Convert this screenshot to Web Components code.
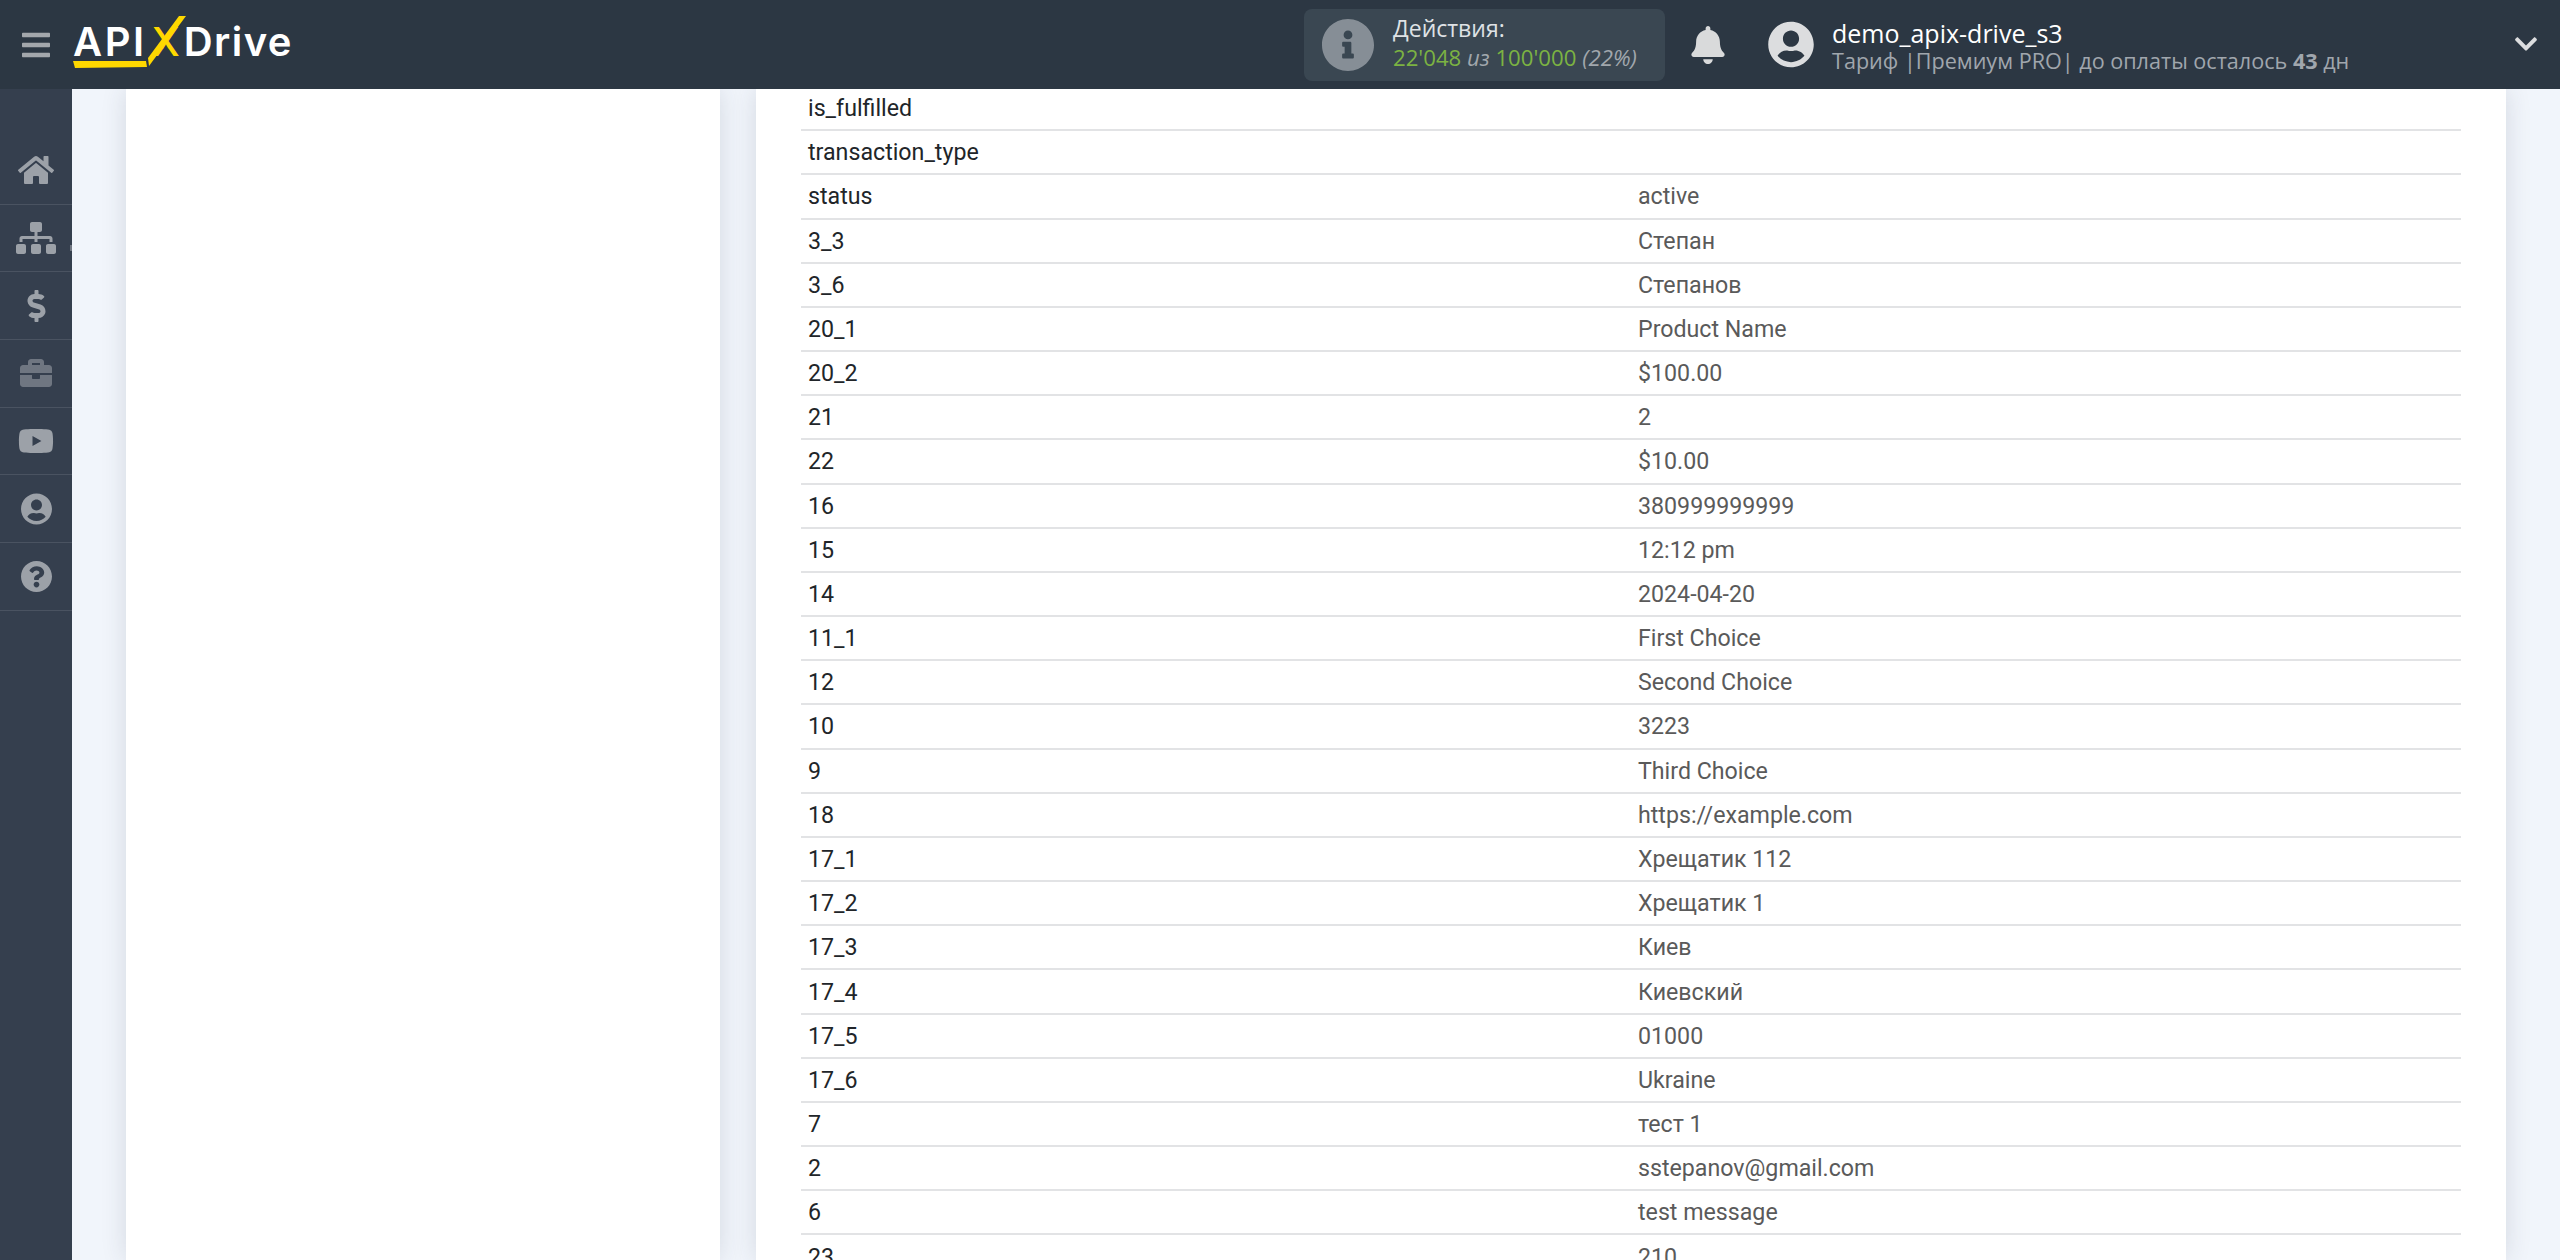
<!DOCTYPE html>
<html lang="ru">
<head>
<meta charset="utf-8">
<title>ApiX-Drive</title>
<style>
  html, body { margin: 0; height: 100%; overflow: hidden; background: #f1f5fb; }
</style>
</head>
<body>
<apix-app>
  <apix-header slot="header"></apix-header>
  <apix-sidebar slot="sidebar"></apix-sidebar>
  <apix-card slot="side"></apix-card>
  <apix-card slot="main">
    <data-table id="table"></data-table>
  </apix-card>
</apix-app>

<script>
const ICONS = {
  bars: ["0 0 448 512", "M16 132h416c8.837 0 16-7.163 16-16V76c0-8.837-7.163-16-16-16H16C7.163 60 0 67.163 0 76v40c0 8.837 7.163 16 16 16zm0 160h416c8.837 0 16-7.163 16-16v-40c0-8.837-7.163-16-16-16H16c-8.837 0-16 7.163-16 16v40c0 8.837 7.163 16 16 16zm0 160h416c8.837 0 16-7.163 16-16v-40c0-8.837-7.163-16-16-16H16c-8.837 0-16 7.163-16 16v40c0 8.837 7.163 16 16 16z"],
  home: ["0 0 576 512", "M280.37 148.26L96 300.11V464a16 16 0 0 0 16 16l112.06-.29a16 16 0 0 0 15.92-16V368a16 16 0 0 1 16-16h64a16 16 0 0 1 16 16v95.64a16 16 0 0 0 16 16.05L464 480a16 16 0 0 0 16-16V300L295.67 148.26a12.19 12.19 0 0 0-15.3 0zM571.6 251.47L488 182.56V44.05a12 12 0 0 0-12-12h-56a12 12 0 0 0-12 12v72.61L318.47 43a48 48 0 0 0-61 0L4.34 251.47a12 12 0 0 0-1.6 16.9l25.5 31A12 12 0 0 0 45.15 301l235.22-193.74a12.19 12.19 0 0 1 15.3 0L530.9 301a12 12 0 0 0 16.9-1.6l25.5-31a12 12 0 0 0-1.7-16.93z"],
  sitemap: ["0 0 640 512", "M128 352H32c-17.67 0-32 14.33-32 32v96c0 17.67 14.33 32 32 32h96c17.67 0 32-14.33 32-32v-96c0-17.67-14.33-32-32-32zm-24-80h192v48h48v-48h192v48h48v-57.59c0-21.17-17.23-38.41-38.41-38.41H344v-64h40c17.67 0 32-14.33 32-32V32c0-17.67-14.33-32-32-32H256c-17.67 0-32 14.33-32 32v96c0 17.67 14.33 32 32 32h40v64H94.41C73.23 224 56 241.23 56 262.41V320h48v-48zm264 80h-96c-17.67 0-32 14.33-32 32v96c0 17.67 14.33 32 32 32h96c17.67 0 32-14.33 32-32v-96c0-17.67-14.33-32-32-32zm240 0h-96c-17.67 0-32 14.33-32 32v96c0 17.67 14.33 32 32 32h96c17.67 0 32-14.33 32-32v-96c0-17.67-14.33-32-32-32z"],
  dollar: ["0 0 288 512", "M209.2 233.4l-108-31.6C88.7 198.2 80 186.5 80 173.5c0-16.3 13.2-29.5 29.5-29.5h66.3c12.2 0 24.2 3.7 34.2 10.5 6.1 4.1 14.3 3.1 19.5-2l34.8-34c7.1-6.9 6.1-18.4-1.8-24.5C238 74.8 207.4 64.1 176 64V16c0-8.8-7.2-16-16-16h-32c-8.8 0-16 7.2-16 16v48h-2.5C45.8 64-5.4 118.7.5 183.6c4.2 46.1 39.4 83.6 83.8 96.6l102.5 30c12.5 3.7 21.2 15.3 21.2 28.3 0 16.3-13.2 29.5-29.5 29.5h-66.3C100 368 88 364.3 78 357.5c-6.1-4.1-14.3-3.1-19.5 2l-34.8 34c-7.1 6.9-6.1 18.4 1.8 24.5 24.5 19.2 55.1 29.9 86.5 30v48c0 8.8 7.2 16 16 16h32c8.8 0 16-7.2 16-16v-48.2c46.6-.9 90.3-28.6 105.7-72.7 21.5-61.6-14.6-124.8-72.5-141.7z"],
  briefcase: ["0 0 512 512", "M320 336c0 8.84-7.16 16-16 16h-96c-8.84 0-16-7.16-16-16v-48H0v144c0 25.6 22.4 48 48 48h416c25.6 0 48-22.4 48-48V288H320v48zm144-208h-80V80c0-25.6-22.4-48-48-48H176c-25.6 0-48 22.4-48 48v48H48c-25.6 0-48 22.4-48 48v80h512v-80c0-25.6-22.4-48-48-48zm-144 0H192V96h128v32z"],
  youtube: ["0 0 576 512", "M549.655 124.083c-6.281-23.65-24.787-42.276-48.284-48.597C458.781 64 288 64 288 64S117.22 64 74.629 75.486c-23.497 6.322-42.003 24.947-48.284 48.597-11.412 42.867-11.412 132.305-11.412 132.305s0 89.438 11.412 132.305c6.281 23.65 24.787 41.5 48.284 47.821C117.22 448 288 448 288 448s170.78 0 213.371-11.486c23.497-6.321 42.003-24.171 48.284-47.821 11.412-42.867 11.412-132.305 11.412-132.305s0-89.438-11.412-132.305zm-317.51 213.508V175.185l142.739 81.205-142.739 81.201z"],
  user: ["0 0 496 512", "M248 8C111 8 0 119 0 256s111 248 248 248 248-111 248-248S385 8 248 8zm0 96c48.6 0 88 39.4 88 88s-39.4 88-88 88-88-39.4-88-88 39.4-88 88-88zm0 344c-58.7 0-111.3-26.6-146.5-68.2 18.8-35.4 55.6-59.8 98.5-59.8 2.4 0 4.8.4 7.1 1.1 13 4.2 26.6 6.9 40.9 6.9 14.3 0 28-2.7 40.9-6.9 2.3-.7 4.7-1.1 7.1-1.1 42.9 0 79.7 24.4 98.5 59.8C359.3 421.4 306.7 448 248 448z"],
  question: ["8 8 496 496", "M504 256c0 136.997-111.043 248-248 248S8 392.997 8 256C8 119.083 119.043 8 256 8s248 111.083 248 248zM262.655 90c-54.497 0-89.255 22.957-116.549 63.758-3.536 5.286-2.353 12.415 2.715 16.258l34.699 26.31c5.205 3.947 12.621 3.008 16.665-2.122 17.864-22.658 30.113-35.797 57.303-35.797 20.429 0 45.698 13.148 45.698 32.958 0 14.976-12.363 22.667-32.534 33.976C247.128 238.528 216 254.941 216 296v4c0 6.627 5.373 12 12 12h56c6.627 0 12-5.373 12-12v-1.333c0-28.462 83.186-29.647 83.186-106.667 0-58.002-60.165-102-116.531-102zM256 338c-25.365 0-46 20.635-46 46 0 25.364 20.635 46 46 46s46-20.636 46-46c0-25.365-20.635-46-46-46z"],
  info: ["8 8 496 496", "M256 8C119.043 8 8 119.083 8 256c0 136.997 111.043 248 248 248s248-111.003 248-248C504 119.083 392.957 8 256 8zm0 110c23.196 0 42 18.804 42 42s-18.804 42-42 42-42-18.804-42-42 18.804-42 42-42zm56 254c0 6.627-5.373 12-12 12h-88c-6.627 0-12-5.373-12-12v-24c0-6.627 5.373-12 12-12h12v-64h-12c-6.627 0-12-5.373-12-12v-24c0-6.627 5.373-12 12-12h64c6.627 0 12 5.373 12 12v100h12c6.627 0 12 5.373 12 12v24z"],
  bell: ["0 0 448 512", "M224 512c35.32 0 63.97-28.65 63.97-63.97H160.03C160.03 483.35 188.68 512 224 512zm215.39-149.71c-19.32-20.76-55.47-51.99-55.47-154.29 0-77.7-54.48-139.9-127.94-155.16V32c0-17.67-14.32-32-31.98-32s-31.98 14.33-31.98 32v20.84C118.56 68.1 64.08 130.3 64.08 208c0 102.3-36.15 133.53-55.47 154.29-6 6.45-8.66 14.16-8.61 21.71.11 16.4 12.98 32 32.1 32h383.8c19.12 0 32-15.6 32.1-32 .05-7.55-2.61-15.27-8.61-21.71z"],
  chevron: ["0 96 448 320", "M207.029 381.476L12.686 187.132c-9.373-9.373-9.373-24.569 0-33.941l22.667-22.667c9.357-9.357 24.522-9.375 33.901-.04L224 284.505l154.745-154.021c9.379-9.335 24.544-9.317 33.901.04l22.667 22.667c9.373 9.373 9.373 24.569 0 33.941L240.971 381.476c-9.373 9.372-24.569 9.372-33.942 0z"]
};

const icon = (name, w, h) =>
  `<svg width="${w}" height="${h}" viewBox="${ICONS[name][0]}" fill="currentColor"><path d="${ICONS[name][1]}"/></svg>`;

class ApixApp extends HTMLElement {
  constructor() {
    super();
    this.attachShadow({ mode: "open" }).innerHTML = `
      <style>
        :host { display: flex; flex-direction: column; height: 1260px; overflow: hidden; }
        .body { flex: 1; display: flex; min-height: 0; }
        .content {
          flex: 1; min-width: 0; display: flex; gap: 36px;
          padding: 0 54px; overflow: hidden;
        }
        ::slotted([slot="side"]) { width: 594px; flex: none; }
        ::slotted([slot="main"]) { flex: 1; min-width: 0; }
      </style>
      <slot name="header"></slot>
      <div class="body">
        <slot name="sidebar"></slot>
        <div class="content">
          <slot name="side"></slot>
          <slot name="main"></slot>
        </div>
      </div>
    `;
  }
}

class ApixHeader extends HTMLElement {
  constructor() {
    super();
    this.attachShadow({ mode: "open" }).innerHTML = `
      <style>
        :host {
          display: flex; align-items: center; height: 89px; flex: none;
          background: #2c3743; color: #fff;
          font-family: "Open Sans", sans-serif;
          position: relative; z-index: 2;
        }
        .burger { margin-left: 22px; color: #a3a7ac; display: flex; }
        .logo {
          position: relative; margin-left: 23px; display: flex; align-items: baseline;
          width: 224px; height: 89px; line-height: 84px;
          font-family: Inter, sans-serif; font-weight: 600; font-size: 40px;
        }
        .logo .api { letter-spacing: 2.6px; }
        .logo .x { color: #ffd800; margin: 0 4px 0 5px; font-weight: 500; }
        .logo .drive { letter-spacing: 1.4px; }
        .logo svg { position: absolute; left: 0; top: 0; }
        .stats {
          margin-left: 1007px; width: 361px; height: 72px; box-sizing: border-box;
          background: #3a4752; border-radius: 8px;
          display: flex; align-items: center; padding-left: 18px; gap: 19px;
        }
        .stats .ico { color: #868e96; display: flex; }
        .stats .txt { margin-top: -3px; white-space: nowrap; }
        .stats .ttl { font-size: 23px; line-height: 29px; color: #dfe2e5; }
        .stats .val { font-size: 22.2px; line-height: 29px; color: #7cb342; }
        .stats .val i { color: #a1a7ad; }
        .bell { margin-left: 26px; color: #d9dadb; display: flex; }
        .avatar { margin-left: 43px; color: #dcdddf; display: flex; }
        .user { margin-left: 18px; padding-top: 5px; }
        .user .name { font-size: 25px; line-height: 28px; color: #fff; }
        .user .sub { font-size: 21.6px; line-height: 28px; color: #a0a6ad; white-space: nowrap; }
        .chev { position: absolute; right: 22px; top: 36px; color: #dcdddf; display: flex; }
      </style>
      <div class="burger">${icon("bars", 28, 32)}</div>
      <div class="logo">
        <span class="api">API</span><span class="x">X</span><span class="drive">Drive</span>
        <svg width="224" height="89" viewBox="0 0 224 89" fill="#ffd800">
          <polygon points="0,61 73,61 74,67 2,68"/>
          <polygon points="75,58 106,16 113,16 76,66"/>
        </svg>
      </div>
      <div class="stats">
        <div class="ico">${icon("info", 52, 52)}</div>
        <div class="txt">
          <div class="ttl">Действия:</div>
          <div class="val">22'048 <i>из</i> 100'000 <i>(22%)</i></div>
        </div>
      </div>
      <div class="bell">${icon("bell", 34, 38)}</div>
      <div class="avatar">${icon("user", 46, 47)}</div>
      <div class="user">
        <div class="name">demo_apix-drive_s3</div>
        <div class="sub">Тариф |Премиум PRO| до оплаты осталось <b>43</b> дн</div>
      </div>
      <div class="chev">${icon("chevron", 24, 16)}</div>
    `;
  }
}

const MENU = [
  ["home", 36, 32], ["sitemap", 40, 32], ["dollar", 19, 32, ""],
  ["briefcase", 32, 32, "dim"], ["youtube", 36, 32], ["user", 31, 32], ["question", 31, 31]
];

class ApixSidebar extends HTMLElement {
  constructor() {
    super();
    this.attachShadow({ mode: "open" }).innerHTML = `
      <style>
        :host {
          display: block; width: 72px; flex: none; box-sizing: border-box;
          background: #353f4e; padding-top: 48px; color: #9ca1a8;
          position: relative;
        }
        /* small tab on the sidebar edge, next to the sitemap item */
        :host::after {
          content: ""; position: absolute; right: 0; top: 156px;
          width: 2px; height: 6px; background: #6f7681;
        }
        .item {
          height: 67.7px; box-sizing: border-box; border-bottom: 1px solid #4a5361;
          display: flex; align-items: center; justify-content: center;
        }
        .dim { color: #6f7681; }
      </style>
      ${MENU.map(([name, w, h, cls]) => `<div class="item ${cls || ""}">${icon(name, w, h)}</div>`).join("")}
    `;
  }
}

class ApixCard extends HTMLElement {
  constructor() {
    super();
    this.attachShadow({ mode: "open" }).innerHTML = `
      <style>
        :host {
          display: block; background: #fff; box-sizing: border-box;
          box-shadow: 0 0 24px rgba(40, 50, 70, .14);
          padding: 0 45px; overflow: hidden; min-height: 100%;
        }
      </style>
      <slot></slot>
    `;
  }
}

class DataRow extends HTMLElement {
  constructor() {
    super();
    this.attachShadow({ mode: "open" }).innerHTML = `
      <style>
        :host {
          display: grid; grid-template-columns: 1fr 1fr; align-items: center;
          height: 44.18px; box-sizing: border-box; border-bottom: 2px solid #e2e3e5;
          font-family: Roboto, sans-serif; font-size: 23.2px;
        }
        div { padding-left: 7px; white-space: nowrap; }
        .k { color: #212529; }
        .v { color: #5a5a5a; }
      </style>
      <div class="k"></div><div class="v"></div>
    `;
  }
  connectedCallback() {
    this.shadowRoot.querySelector(".k").textContent = this.getAttribute("label");
    this.shadowRoot.querySelector(".v").textContent = this.getAttribute("value") || "";
  }
}

const ROWS = [
  ["is_fulfilled", ""], ["transaction_type", ""], ["status", "active"],
  ["3_3", "Степан"], ["3_6", "Степанов"], ["20_1", "Product Name"], ["20_2", "$100.00"],
  ["21", "2"], ["22", "$10.00"], ["16", "380999999999"], ["15", "12:12 pm"],
  ["14", "2024-04-20"], ["11_1", "First Choice"], ["12", "Second Choice"], ["10", "3223"],
  ["9", "Third Choice"], ["18", "https://example.com"], ["17_1", "Хрещатик 112"],
  ["17_2", "Хрещатик 1"], ["17_3", "Киев"], ["17_4", "Киевский"], ["17_5", "01000"],
  ["17_6", "Ukraine"], ["7", "тест 1"], ["2", "sstepanov@gmail.com"], ["6", "test message"],
  ["23", "210"]
];

class DataTable extends HTMLElement {
  constructor() {
    super();
    this.attachShadow({ mode: "open" }).innerHTML = `
      <style>
        :host { display: block; margin-top: -2px; }
      </style>
      <slot></slot>
    `;
  }
  connectedCallback() {
    ROWS.forEach(([label, value]) => {
      const row = document.createElement("data-row");
      row.setAttribute("label", label);
      row.setAttribute("value", value);
      this.appendChild(row);
    });
  }
}

customElements.define("apix-app", ApixApp);
customElements.define("apix-header", ApixHeader);
customElements.define("apix-sidebar", ApixSidebar);
customElements.define("apix-card", ApixCard);
customElements.define("data-row", DataRow);
customElements.define("data-table", DataTable);
</script>
</body>
</html>
